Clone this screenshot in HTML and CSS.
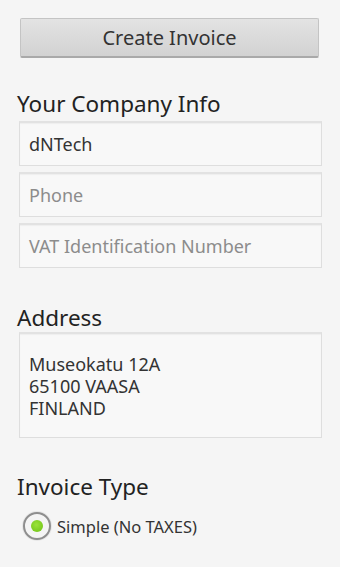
FILE: index.html
```html
<!DOCTYPE html>
<html>
<head>
<meta charset="utf-8">
<link rel="stylesheet" href="styles.css">
</head>
<body>
<div class="screen">
  <div class="btn-row"><div class="btn">Create Invoice</div></div>
  <div class="section">
    <div class="heading">Your Company Info</div>
    <div class="field"><span class="value">dNTech</span></div>
    <div class="field"><span class="hint">Phone</span></div>
    <div class="field"><span class="hint">VAT Identification Number</span></div>
  </div>
  <div class="section addr">
    <div class="heading">Address</div>
    <div class="area"><div class="value">Museokatu 12A</div><div class="value">65100 VAASA</div><div class="value">FINLAND</div></div>
  </div>
  <div class="section itype">
    <div class="heading">Invoice Type</div>
    <div class="radio-row">
      <span class="radio"><span class="dot"></span></span>
      <span class="radio-label">Simple (No TAXES)</span>
    </div>
  </div>
</div>
</body>
</html>
```
FILE: styles.css
```css
html, body { margin: 0; padding: 0; }
body { background: #f5f5f5; font-family: "Noto Sans", "Open Sans", sans-serif; width: 340px; height: 567px; overflow: hidden; }
.screen { padding: 18px 18px 0 17px; }
.btn-row { padding: 0 3px 0 3px; }
.btn {
  height: 40px; box-sizing: border-box;
  border: 1px solid #c4c4c4; border-bottom: 2px solid #a9a9a9;
  border-radius: 2px;
  background: linear-gradient(#e3e3e3, #d2d2d2);
  color: #333; font-size: 20px; line-height: 37px; text-align: center;
}
.section { margin-top: 32px; }
.heading { font-size: 22.5px; color: #222; line-height: 28px; height: 28px; }
.field, .area {
  margin-left: 2px;
  height: 45px; box-sizing: border-box;
  background: #f8f8f8;
  border: 1px solid #dedede; border-top: 2px solid #e2e2e2;
  box-shadow: inset 0 1px 1px rgba(0,0,0,0.04);
  padding-left: 9px; display: flex; align-items: center;
  font-size: 18px;
  margin-top: 6px;
}
.section .heading + .field { margin-top: 3px; }
.value { color: #333; }
.hint { color: #8c8c8c; }
.addr { margin-top: 36px; }
.area { height: 106px; display: block; padding-top: 19px; line-height: 22px; margin-top: 0; }
.itype { margin-top: 35px; }
.radio-row { display: flex; align-items: center; margin-top: 11px; margin-left: 6px; }
.radio {
  width: 28px; height: 28px; border-radius: 50%; box-sizing: border-box;
  border: 2px solid #8e8e8e; background: #f4f4f4;
  box-shadow: 0 0 0 1px #e6e6e6;
  display: flex; align-items: center; justify-content: center;
}
.dot { width: 12px; height: 12px; border-radius: 50%; background: radial-gradient(circle at 45% 40%, #9be33a, #6cc014); }
.radio-label { font-size: 16.5px; color: #333; margin-left: 6px; }
```
